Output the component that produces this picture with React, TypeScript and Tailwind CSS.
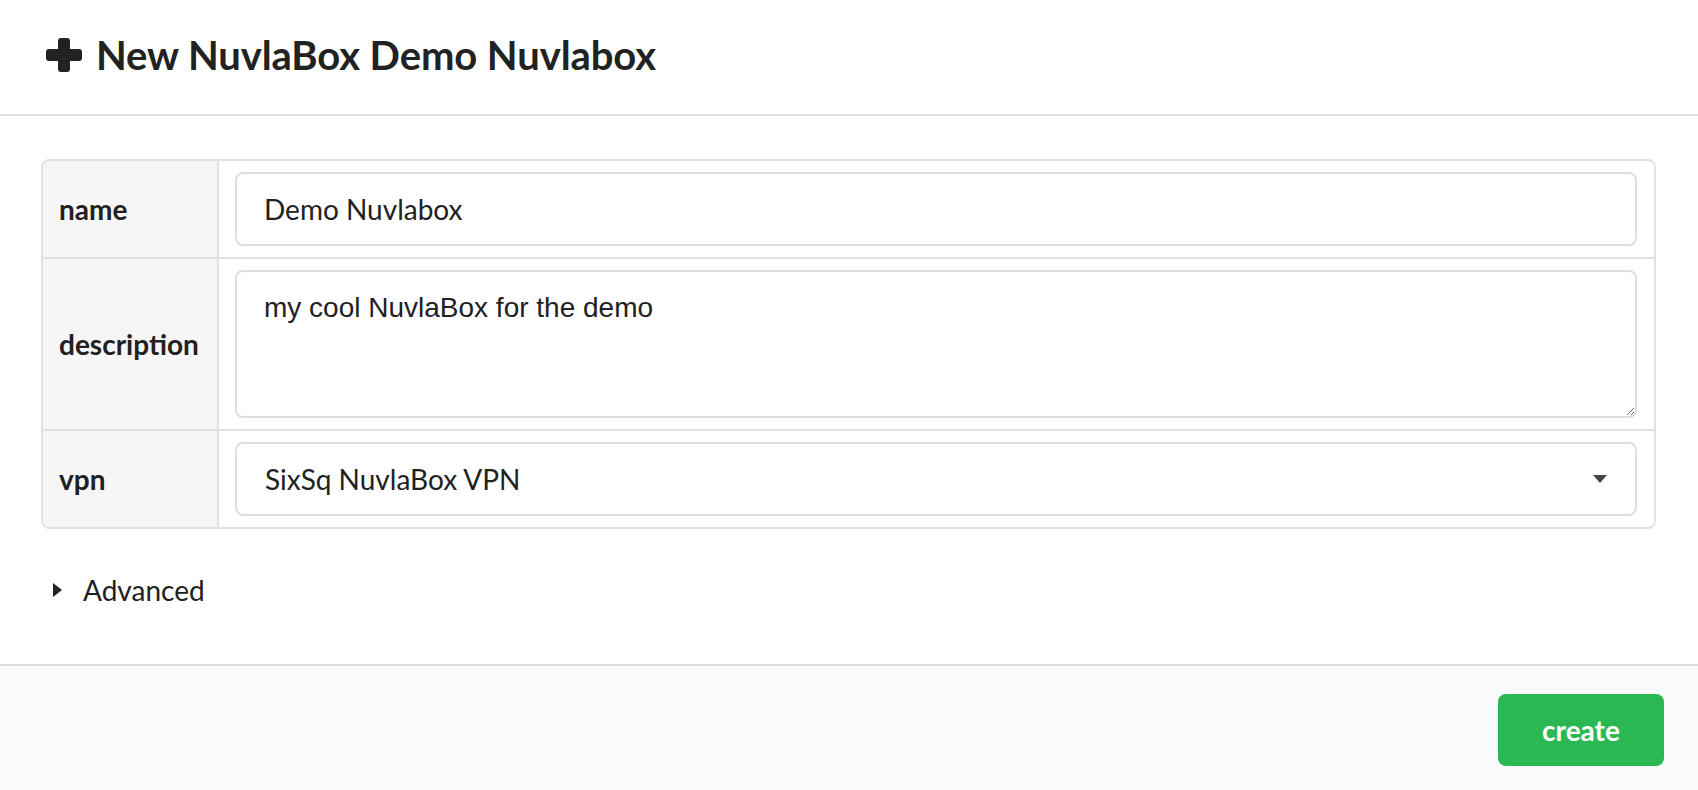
import React from "react";

const rows = ["name", "description", "vpn"];

export default function App() {
  return (
    <div className="w-[1698px] h-[790px] overflow-hidden bg-white font-['Lato',sans-serif] text-[#212121]">
      {/* Modal header */}
      <div className="h-[116px] border-b-2 border-[#e0e0e1] pl-[46px] pb-[5px] flex items-center gap-[14px]">
        <svg width="36" height="34" viewBox="0 0 36 34" className="text-[#222]">
          <rect x="12" y="0" width="12" height="34" rx="3" fill="currentColor" />
          <rect x="0" y="11" width="36" height="12" rx="3" fill="currentColor" />
        </svg>
        <h1 className="text-[40px] font-bold leading-none tracking-[-0.1px] text-[#222]">
          New NuvlaBox Demo Nuvlabox
        </h1>
      </div>

      {/* Modal content */}
      <div className="h-[548px] pt-[43px] pl-[41px] pr-[42px]">
        <div className="border-2 border-[#e2e2e3] rounded-[8px] overflow-hidden">
          {/* name */}
          <div className="flex border-b-2 border-[#e2e2e3]">
            <div className="w-[176px] shrink-0 bg-[#f6f6f6] border-r-2 border-[#e2e2e3] pl-[16px] flex items-center text-[28px] font-bold">
              {rows[0]}
            </div>
            <div className="flex-1 pl-[16px] pr-[17px] py-[11px]">
              <input
                readOnly
                defaultValue="Demo Nuvlabox"
                className="w-full h-[74px] border-2 border-[#dedede] rounded-[8px] px-[27px] text-[28px] text-[#212121] outline-none font-['Lato',sans-serif]"
              />
            </div>
          </div>

          {/* description */}
          <div className="flex border-b-2 border-[#e2e2e3]">
            <div className="w-[176px] shrink-0 bg-[#f6f6f6] border-r-2 border-[#e2e2e3] pl-[16px] flex items-center text-[28px] font-bold">
              {rows[1]}
            </div>
            <div className="flex-1 pl-[16px] pr-[17px] py-[11px] flex">
              <textarea
                readOnly
                defaultValue="my cool NuvlaBox for the demo"
                className="w-full h-[148px] border-2 border-[#dedede] rounded-[8px] px-[27px] py-[18px] text-[28px] leading-[36px] text-[#212121] outline-none resize-y font-['Liberation_Sans',Arial,sans-serif]"
              />
            </div>
          </div>

          {/* vpn */}
          <div className="flex">
            <div className="w-[176px] shrink-0 bg-[#f6f6f6] border-r-2 border-[#e2e2e3] pl-[16px] flex items-center text-[28px] font-bold">
              {rows[2]}
            </div>
            <div className="flex-1 pl-[16px] pr-[17px] py-[11px]">
              <div className="h-[74px] border-2 border-[#dedede] rounded-[8px] pl-[28px] pr-[28px] flex items-center justify-between text-[28px]">
                <span>SixSq NuvlaBox VPN</span>
                <svg width="14" height="8" viewBox="0 0 14 8">
                  <path d="M0 0h14L7 8z" fill="#444" />
                </svg>
              </div>
            </div>
          </div>
        </div>

        {/* Advanced accordion */}
        <div className="mt-[47px] pl-[12px] flex items-center gap-[21px] text-[28px] leading-[28px]">
          <svg width="9" height="14" viewBox="0 0 9 14">
            <path d="M0 0l9 7L0 14z" fill="#222" />
          </svg>
          <span>Advanced</span>
        </div>
      </div>

      {/* Modal actions */}
      <div className="h-[126px] border-t-2 border-[#dcdcdd] bg-[#f9fafb] flex justify-end items-start pt-[28px] pr-[34px]">
        <button className="w-[166px] h-[72px] rounded-[8px] bg-[#2bb853] text-white text-[28px] font-bold leading-none">
          create
        </button>
      </div>
    </div>
  );
}
